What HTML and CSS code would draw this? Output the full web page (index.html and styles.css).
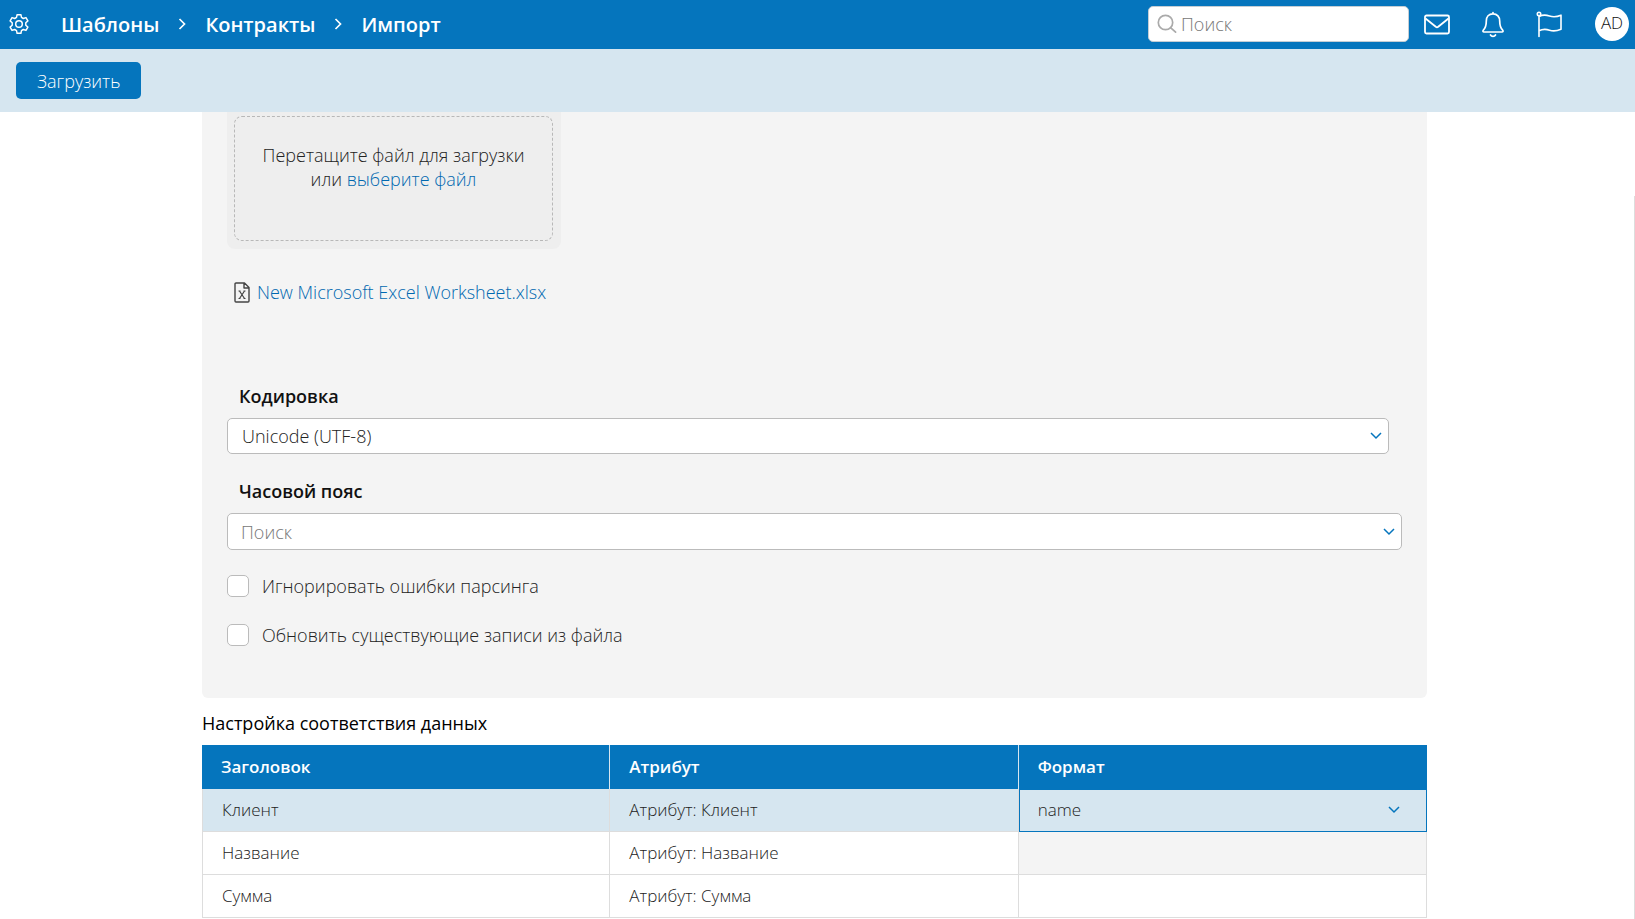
FILE: index.html
```html
<!DOCTYPE html>
<html lang="ru">
<head>
<meta charset="utf-8">
<title>Импорт</title>
<link rel="stylesheet" href="styles.css">
</head>
<body>
<header class="topbar">
  <button class="icon-button settings" type="button" aria-label="Настройки">
    <svg width="22" height="22" viewBox="0 0 24 24" fill="none" stroke="currentColor" stroke-width="1.6" stroke-linejoin="round"><path d="M9.9 1.8h4.2l.6 3 2 1.2 2.9-1 2.1 3.600-2.300 2v2.800l2.300 2-2.100 3.600-2.900-1-2 1.200-.6 3H9.900l-.6-3-2-1.200-2.900 1-2.100-3.600 2.300-2v-2.800l-2.300-2 2.100-3.600 2.900 1 2-1.200z"/><circle cx="12" cy="12" r="3.600"/></svg>
  </button>
  <nav class="crumbs" aria-label="Навигация">
    <a href="#">Шаблоны</a>
    <svg width="8" height="12" viewBox="0 0 8 12" fill="none" stroke="currentColor" stroke-width="1.700"><path d="M1.500 1l5 5-5 5"/></svg>
    <a href="#">Контракты</a>
    <svg width="8" height="12" viewBox="0 0 8 12" fill="none" stroke="currentColor" stroke-width="1.700"><path d="M1.500 1l5 5-5 5"/></svg>
    <a href="#">Импорт</a>
  </nav>
  <label class="search">
    <svg width="20" height="20" viewBox="0 0 20 20" fill="none" stroke="currentColor" stroke-width="1.700" stroke-linecap="round"><circle cx="8.500" cy="8.500" r="7.200"/><path d="M13.800 13.800l4.800 4.400"/></svg>
    <input type="search" placeholder="Поиск" aria-label="Поиск">
  </label>
  <div class="tools">
    <button class="icon-button" type="button" aria-label="Сообщения">
      <svg width="28" height="28" viewBox="0 0 28 28" fill="none" stroke="currentColor" stroke-width="1.800" stroke-linejoin="round"><rect x="2" y="5.500" width="24" height="18" rx="1.500"/><path d="M2.500 8.500l10.300 8.300q1.200.9 2.400 0L25.500 8.500"/></svg>
    </button>
    <button class="icon-button" type="button" aria-label="Уведомления">
      <svg width="28" height="28" viewBox="0 0 28 28" fill="none" stroke="currentColor" stroke-width="1.700" stroke-linejoin="round" stroke-linecap="round"><path d="M14 2.600v1.200M14 3.800c-4.200 0-6.700 3-6.700 7.200 0 5.500-1.300 7.500-3 9.200-.8.900-.3 1.800.7 1.800h18c1 0 1.500-.9.700-1.800-1.700-1.700-3-3.700-3-9.200 0-4.200-2.500-7.200-6.700-7.200zM11.500 25c1 1.700 4 1.700 5 0"/></svg>
    </button>
    <button class="icon-button" type="button" aria-label="Задачи">
      <svg width="28" height="28" viewBox="0 0 28 28" fill="none" stroke="currentColor" stroke-width="1.600" stroke-linejoin="round" stroke-linecap="round"><circle cx="4" cy="4" r="1.700"/><path d="M4 6v20.500M4 6.500c4-2 7.500-1.500 10.500-.5s6.500 1.300 11.500-.8v14c-5 2.200-8.500 2-11.500 1S7.500 19 4 20.800"/></svg>
    </button>
    <button class="avatar" type="button">AD</button>
  </div>
</header>
<div class="actions">
  <button class="primary" type="button">Загрузить</button>
</div>
<div class="viewport">
  <main class="content">
    <form class="panel">
      <div class="dropzone">
        <div class="dropzone-inner">
          <p>Перетащите файл для загрузки<br>или <a href="#">выберите файл</a></p>
        </div>
      </div>
      <a class="file" href="#">
        <svg width="16" height="21" viewBox="0 0 16 21" fill="none" stroke="currentColor" stroke-width="1.400" stroke-linejoin="round"><path d="M2 1h8.500L15 5.500V19a1 1 0 0 1-1 1H2a1 1 0 0 1-1-1V2a1 1 0 0 1 1-1zM10 1v5h5"/><path stroke-width="1.200" d="M5.500 9l5 7.500M10.500 9l-5 7.500M4.500 16.500h2M9.500 16.500h2M4.500 9h2M9.500 9h2"/></svg>
        <span>New Microsoft Excel Worksheet.xlsx</span>
      </a>
      <div class="field encoding">
        <label for="encoding">Кодировка</label>
        <div class="picker">
          <select id="encoding"><option>Unicode (UTF-8)</option></select>
          <svg width="12" height="8" viewBox="0 0 12 8"><path d="M1 1l5 5 5-5"/></svg>
        </div>
      </div>
      <div class="field timezone">
        <label for="timezone">Часовой пояс</label>
        <div class="picker">
          <input id="timezone" type="text" placeholder="Поиск">
          <svg width="12" height="8" viewBox="0 0 12 8"><path d="M1 1l5 5 5-5"/></svg>
        </div>
      </div>
      <div class="checks">
        <label class="check"><input type="checkbox"><span>Игнорировать ошибки парсинга</span></label>
        <label class="check"><input type="checkbox"><span>Обновить существующие записи из файла</span></label>
      </div>
    </form>
    <h2 class="title">Настройка соответствия данных</h2>
    <table class="mapping">
      <thead>
        <tr><th scope="col">Заголовок</th><th scope="col">Атрибут</th><th scope="col">Формат</th></tr>
      </thead>
      <tbody>
        <tr class="selected">
          <td>Клиент</td><td>Атрибут: Клиент</td>
          <td class="format">
            <div class="picker">
              <select aria-label="Формат"><option>name</option></select>
              <svg width="12" height="8" viewBox="0 0 12 8"><path d="M1 1l5 5 5-5"/></svg>
            </div>
          </td>
        </tr>
        <tr><td>Название</td><td>Атрибут: Название</td><td class="disabled"></td></tr>
        <tr><td>Сумма</td><td>Атрибут: Сумма</td><td></td></tr>
      </tbody>
    </table>
  </main>
  <div class="rail"></div>
</div>
</body>
</html>
```
FILE: styles.css
```css
* { box-sizing: border-box; }

body {
  margin: 0;
  height: 100vh;
  display: flex;
  flex-direction: column;
  overflow: hidden;
  background: #fff;
  color: #222;
  font: 300 18px/24px "Open Sans", "Noto Sans", sans-serif;
}

button, input, select { font: inherit; color: inherit; }
a { color: #0068b0; text-decoration: none; }

.topbar {
  flex: none;
  display: flex;
  align-items: center;
  height: 49px;
  padding: 0 6px 2px 8px;
  background: #0575bd;
  color: #fff;
}

.icon-button {
  display: flex;
  padding: 0;
  border: 0;
  background: none;
  cursor: pointer;
}

.crumbs {
  flex: 1;
  display: flex;
  align-items: center;
  gap: 19px;
  padding-left: 31px;
  font-size: 20px;
  font-weight: 600;
}
.crumbs a {
  padding-top: 2px;
  color: #fff;
}

.search {
  display: flex;
  align-items: center;
  gap: 4px;
  width: 261px;
  height: 36px;
  padding: 0 8px;
  border: 1px solid #c4cdd4;
  border-radius: 5px;
  background: #fff;
  color: #aaa;
}
.search svg { flex: none; }
.search input {
  flex: 1;
  min-width: 0;
  padding: 0;
  border: 0;
  outline: 0;
  background: none;
  color: #222;
}
input::placeholder { color: #777; opacity: 1; }

.tools {
  display: flex;
  align-items: center;
  gap: 28px;
  padding-left: 14px;
}
.avatar {
  width: 34px;
  height: 34px;
  margin-left: 4px;
  padding: 0 0 2px;
  border: 0;
  border-radius: 50%;
  background: #fff;
  color: #111;
  font-size: 17px;
}

.actions {
  flex: none;
  display: flex;
  align-items: center;
  height: 63px;
  padding: 0 16px;
  background: #d6e6f0;
}
.primary {
  height: 37px;
  padding: 0 21px;
  border: 0;
  border-radius: 5px;
  background: #0575bd;
  color: #fff;
}

.viewport {
  flex: 1;
  min-height: 0;
  display: flex;
  overflow: hidden;
}
.content {
  flex: 1;
  padding: 0 207px 0 202px;
}
.rail {
  width: 1px;
  margin-top: 84px;
  background: #ddd;
}

.panel {
  padding: 0 25px 51px;
  border-radius: 0 0 6px 6px;
  background: #f4f4f4;
}
.dropzone {
  width: 334px;
  padding: 4px 8px 8px 7px;
  border-radius: 0 0 8px 8px;
  background: #eee;
}
.dropzone-inner {
  min-height: 125px;
  padding-top: 26px;
  border: 1px dashed #b8b8b8;
  border-radius: 8px;
  text-align: center;
}
.dropzone p { margin: 0; }

.file {
  display: flex;
  align-items: center;
  gap: 7px;
  margin: 31px 0 0 7px;
}
.file svg { color: #444; }

.field label {
  display: block;
  padding-left: 12px;
  color: #111;
  font-weight: 600;
}
.encoding { margin: 80px 13px 0 0; }
.timezone { margin-top: 25px; }

.picker {
  display: grid;
  align-items: center;
}
.picker > * { grid-area: 1 / 1; }
.picker svg {
  justify-self: end;
  margin-right: 7px;
  fill: none;
  stroke: #0575bd;
  stroke-width: 1.5;
  pointer-events: none;
}
.picker select, .picker input {
  width: 100%;
  height: 37px;
  padding: 0 13px;
  border: 1px solid #bbb;
  border-radius: 5px;
  outline: 0;
  background: #fff;
  appearance: none;
}
.field .picker { margin-top: 10px; }
.field .picker select {
  height: 36px;
  padding-left: 14px;
}

.checks {
  display: grid;
  gap: 25px;
  margin-top: 24px;
}
.check {
  display: flex;
  align-items: center;
  gap: 13px;
}
.check input {
  appearance: none;
  width: 22px;
  height: 22px;
  margin: 0;
  border: 1px solid #bbb;
  border-radius: 5px;
  background: #fff;
}

.title {
  margin: 13px 0 10px;
  color: #000;
  font-size: 18px;
  line-height: 24px;
  font-weight: 400;
}

.mapping {
  width: 100%;
  table-layout: fixed;
  border-collapse: separate;
  border-spacing: 0;
  font-size: 17px;
}
.mapping th {
  height: 44px;
  padding: 0 19px;
  border-right: 1px solid #d6e6f0;
  background: #0575bd;
  color: #fff;
  font-weight: 600;
  text-align: left;
}
.mapping th:last-child { border-right-color: #0575bd; }
.mapping td {
  height: 43px;
  padding: 0 19px;
  border-right: 1px solid #ddd;
  border-bottom: 1px solid #ddd;
}
.mapping td:first-child { border-left: 1px solid #ddd; }
.mapping .selected td { background: #d6e6f0; }
.mapping .disabled { background: #f4f4f4; }
.mapping .selected .format {
  padding: 0;
  border: 1px solid #0575bd;
  vertical-align: top;
}
.format .picker select {
  height: 40px;
  padding: 0 18px;
  border: 0;
  background: none;
}
.format .picker svg { margin-right: 26px; }
```
